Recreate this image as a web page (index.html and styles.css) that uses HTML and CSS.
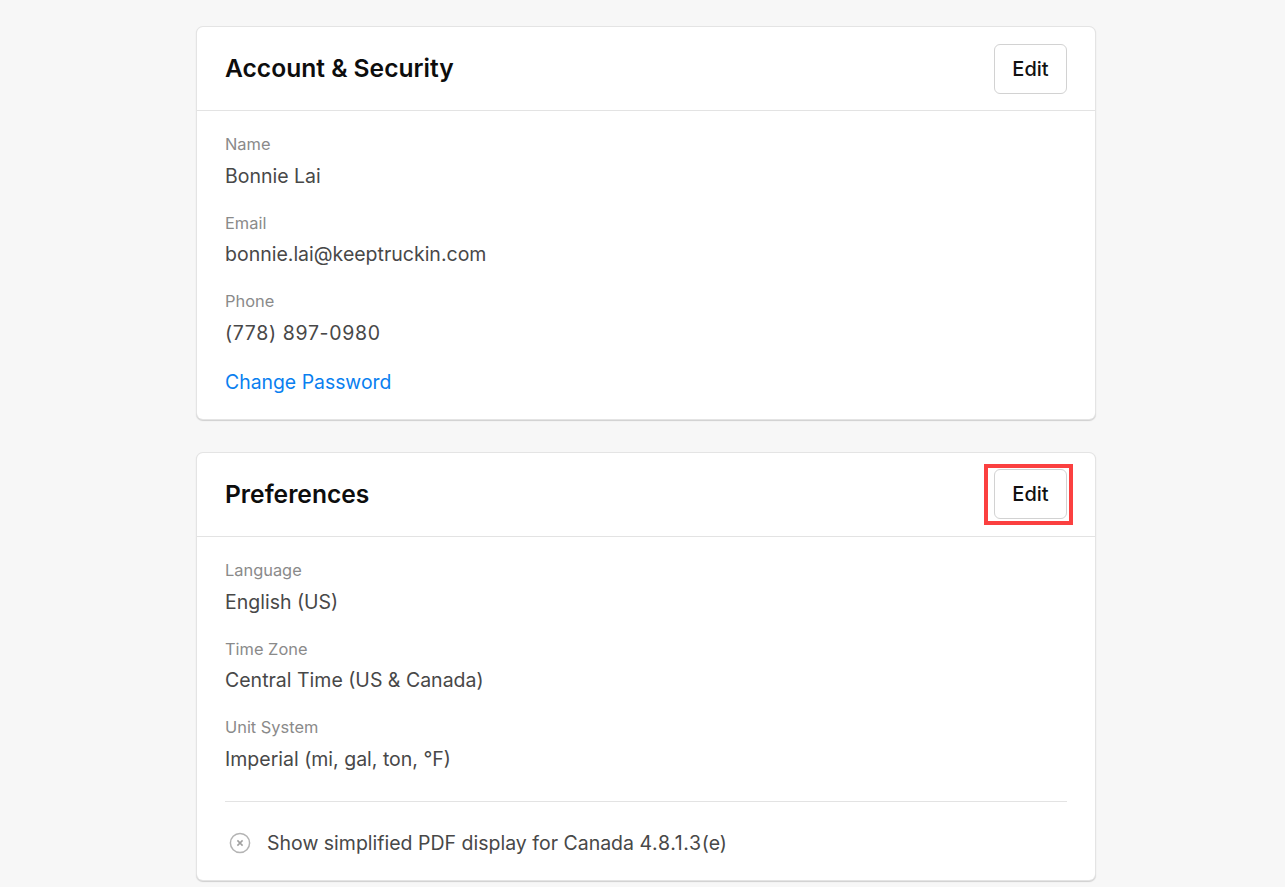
FILE: index.html
```html
<!DOCTYPE html>
<html lang="en">
<head>
<meta charset="utf-8">
<title>Settings</title>
<link rel="stylesheet" href="styles.css">
</head>
<body>
<main class="page">
  <section class="card">
    <header class="card-head">
      <h2>Account &amp; Security</h2>
      <button class="btn">Edit</button>
    </header>
    <div class="card-body">
      <div class="field"><div class="label">Name</div><div class="value">Bonnie Lai</div></div>
      <div class="field"><div class="label">Email</div><div class="value">bonnie.lai@keeptruckin.com</div></div>
      <div class="field"><div class="label">Phone</div><div class="value num">(778) 897-0980</div></div>
      <a class="link" href="#">Change Password</a>
    </div>
  </section>
  <section class="card">
    <header class="card-head">
      <h2>Preferences</h2>
      <span class="btn-wrap"><button class="btn">Edit</button><span class="highlight"></span></span>
    </header>
    <div class="card-body">
      <div class="field"><div class="label">Language</div><div class="value">English (US)</div></div>
      <div class="field"><div class="label">Time Zone</div><div class="value">Central Time (US &amp; Canada)</div></div>
      <div class="field"><div class="label">Unit System</div><div class="value">Imperial (mi, gal, ton, °F)</div></div>
      <div class="option">
        <svg class="x-icon" viewBox="0 0 22 22" width="22" height="22" aria-hidden="true"><circle cx="11" cy="11" r="9.6" fill="none" stroke="#b4b4b4" stroke-width="1.5"/><path d="M8.4 8.4l5.2 5.2M13.6 8.4l-5.2 5.2" fill="none" stroke="#a0a0a0" stroke-width="1.5"/></svg>
        <span class="value">Show simplified PDF display for Canada <span class="num">4.8.1.3</span>(e)</span>
      </div>
    </div>
  </section>
</main>
</body>
</html>
```
FILE: styles.css
```css
* { box-sizing: border-box; }
html, body { margin: 0; height: 887px; overflow: hidden; }
body { background: #f7f7f7; font-family: Inter, "Liberation Sans", sans-serif; color: #424242; }
.page { width: 898px; margin-left: 197px; padding-top: 27px; display: flex; flex-direction: column; gap: 34.5px; }
.card { background: #fff; border-radius: 6px; box-shadow: 0 0 0 1px #e4e4e4, 0 1px 1px 1px #cfcfcf; }
.card-head { height: 84px; padding: 0 28px; display: flex; align-items: center; justify-content: space-between; border-bottom: 1px solid #e3e3e3; }
h2 { margin: -1px 0 0; font-size: 24.6px; font-weight: 600; color: #0d0d0d; }
.btn { display: block; width: 73px; height: 50px; padding: 0; background: #fff; border: 1px solid #d2d2d2; border-radius: 6px; font: 500 20px Inter, "Liberation Sans", sans-serif; color: #111; }
.btn-wrap { position: relative; display: block; height: 50px; margin-top: -2px; }
.highlight { position: absolute; left: -10px; top: -5px; width: 89px; height: 61px; border: 4px solid #fb4040; }
.card-body { padding: 21px 28px 0; }
.field { margin-bottom: 20px; }
.label { font-size: 16.4px; line-height: 24px; color: #8a8a8a; }
.value { font-size: 19.5px; line-height: 30px; color: #484848; }
.field .value { margin-top: 4.5px; }
.num { letter-spacing: 0.65px; }
.link { display: block; margin-top: -1px; font-size: 19.4px; line-height: 30px; color: #0a7ff0; text-decoration: none; padding-bottom: 22px; }
.option { border-top: 1px solid #e3e3e3; margin-top: 27px; height: 79px; padding: 4px 0 0 4px; display: flex; align-items: center; gap: 16px; }
.x-icon { flex: none; margin-top: 1px; }
```
